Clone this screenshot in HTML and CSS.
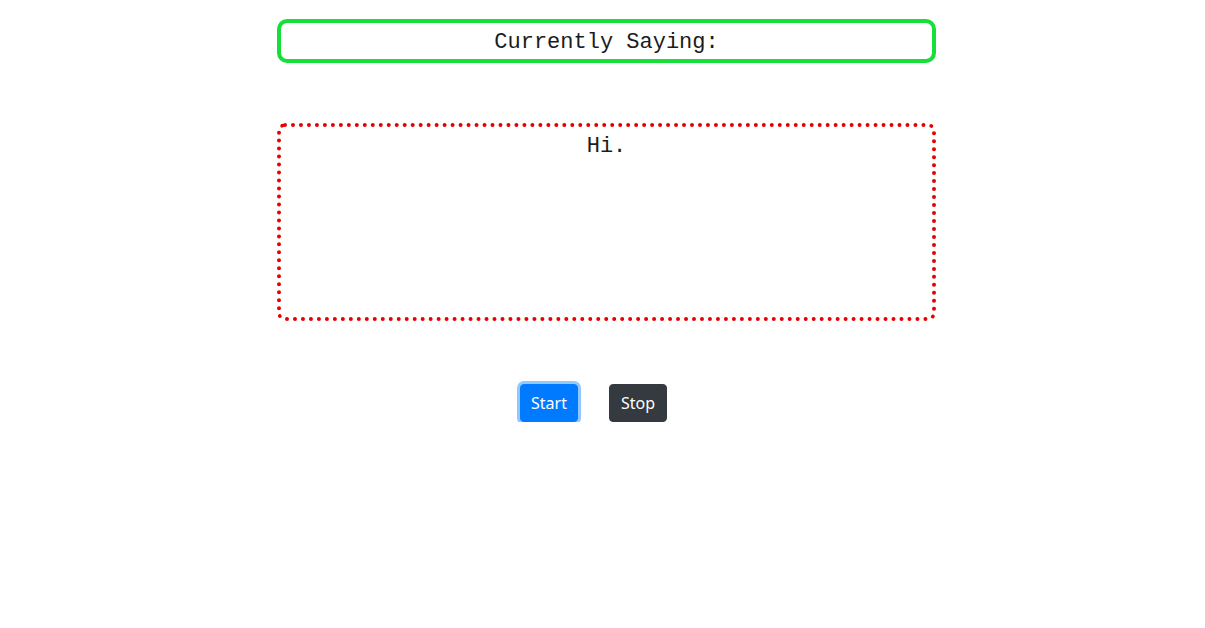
FILE: index.html
```html
<!DOCTYPE html>
<html lang="en">
<head>
<meta charset="utf-8">
<title>Currently Saying</title>
<link rel="stylesheet" href="styles.css">
</head>
<body>
<main class="wrap">
  <div class="saying-label">Currently Saying:</div>
  <div class="saying-box">Hi.</div>
  <div class="controls">
    <button class="btn btn-start" type="button">Start</button>
    <button class="btn btn-stop" type="button">Stop</button>
  </div>
</main>
</body>
</html>
```
FILE: styles.css
```css
html, body {
  margin: 0;
  padding: 0;
  background: #ffffff;
}

body {
  font-family: "Liberation Mono", "DejaVu Sans Mono", monospace;
  color: #212529;
}

.wrap {
  width: 659px;
  margin-left: 277px;
  padding-top: 19px;
}

.saying-label {
  border: 4px solid #16df3a;
  border-radius: 10px;
  height: 34px;
  padding-top: 2px;
  line-height: 36px;
  font-size: 22px;
  text-align: center;
  color: #1c1c1c;
}

.saying-box {
  margin-top: 60px;
  border: 4px dotted #e60000;
  border-radius: 8px;
  padding-top: 7px;
  height: 183px;
  font-size: 22px;
  line-height: 26px;
  text-align: center;
  color: #1c1c1c;
}

.controls {
  display: flex;
  gap: 31px;
  margin-top: 63px;
  padding-left: 243px;
}

.btn {
  font-family: "Noto Sans", "Open Sans", sans-serif;
  font-size: 16px;
  line-height: 24px;
  padding: 6px 10px;
  border-radius: 4px;
  color: #ffffff;
  cursor: pointer;
}

.btn-start {
  background: #007bff;
  border: 1px solid #007bff;
  box-shadow: 0 0 0 3px rgba(38, 143, 255, 0.5);
}

.btn-stop {
  background: #343a40;
  border: 1px solid #343a40;
  padding: 6px 11px;
}
```
